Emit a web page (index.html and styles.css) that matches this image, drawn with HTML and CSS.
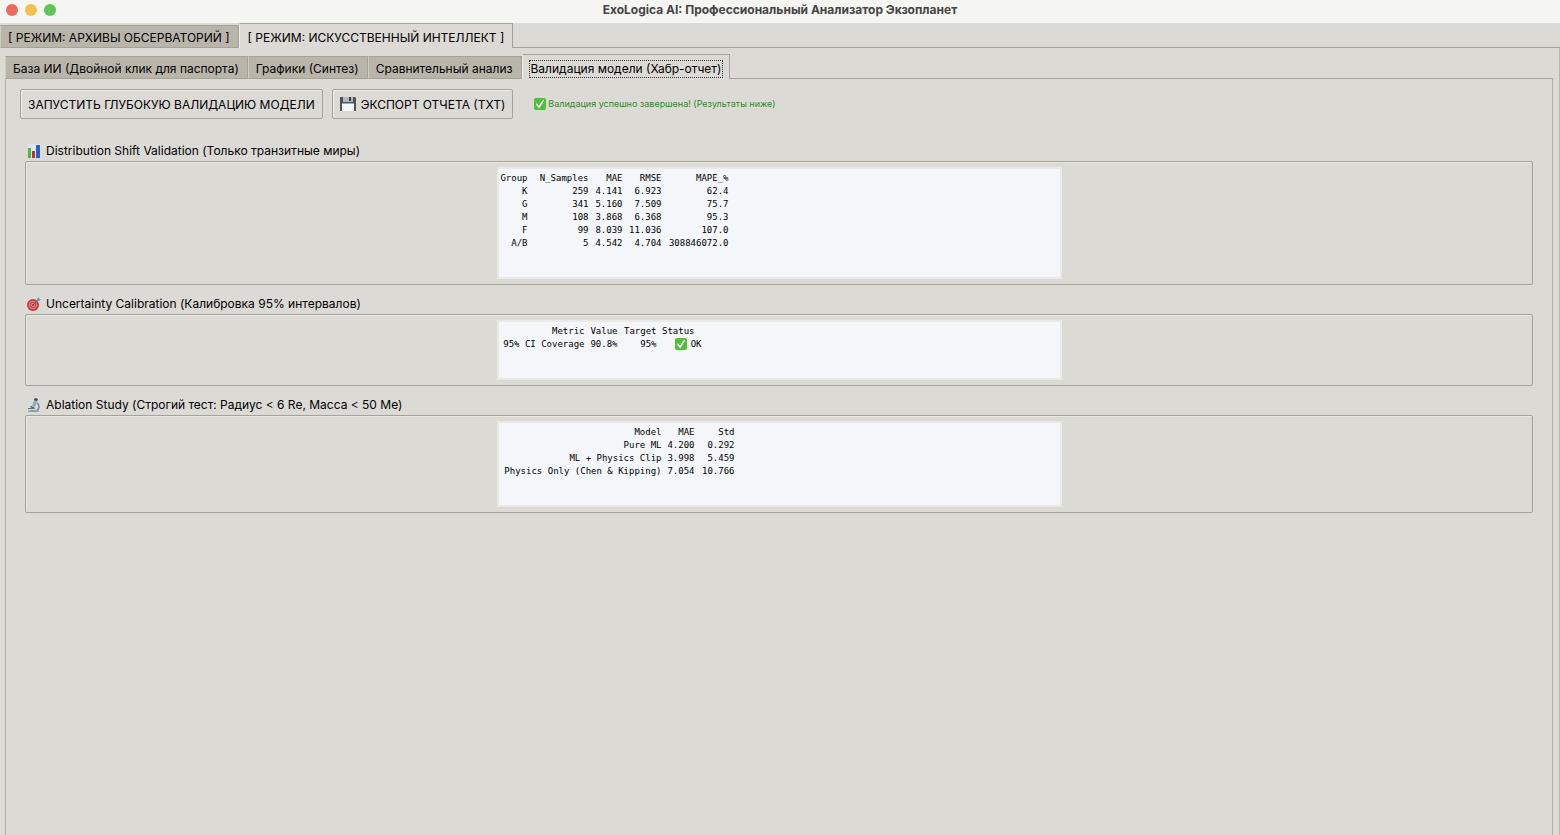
FILE: index.html
```html
<!DOCTYPE html>
<html lang="ru">
<head>
    <meta charset="UTF-8">
    <meta name="viewport" content="width=device-width, initial-scale=1.0">
    <title>ExoLogica AI: Профессиональный Анализатор Экзопланет</title>
    <link rel="stylesheet" href="styles.css">
</head>
<body>
    <header class="titlebar">
        <div class="window-buttons">
            <button class="dot red" aria-label="Закрыть"></button>
            <button class="dot yellow" aria-label="Свернуть"></button>
            <button class="dot green" aria-label="Развернуть"></button>
        </div>
        <h1 class="window-title">ExoLogica AI: Профессиональный Анализатор Экзопланет</h1>
    </header>

    <nav class="tabs mode-tabs" role="tablist">
        <button class="tab" role="tab" aria-selected="false">[ РЕЖИМ: АРХИВЫ ОБСЕРВАТОРИЙ ]</button>
        <button class="tab active" role="tab" aria-selected="true">[ РЕЖИМ: ИСКУССТВЕННЫЙ ИНТЕЛЛЕКТ ]</button>
        <span class="tab-line"></span>
    </nav>

    <main class="mode-pane">
        <nav class="tabs sub-tabs" role="tablist">
            <button class="tab" role="tab" aria-selected="false">База ИИ (Двойной клик для паспорта)</button>
            <button class="tab" role="tab" aria-selected="false">Графики (Синтез)</button>
            <button class="tab" role="tab" aria-selected="false">Сравнительный анализ</button>
            <button class="tab active" role="tab" aria-selected="true"><span class="focus-ring">Валидация модели (Хабр-отчет)</span></button>
            <span class="tab-line"></span>
        </nav>

        <div class="pane">
            <div class="toolbar">
                <button class="btn">ЗАПУСТИТЬ ГЛУБОКУЮ ВАЛИДАЦИЮ МОДЕЛИ</button>
                <button class="btn">
                    <svg class="icon-save" viewBox="0 0 16 16" aria-hidden="true">
                        <path d="M0 1h15l1 1v13H0z" fill="#505256"/>
                        <path d="M3 1h10v5H3z" fill="#b4b7bc"/>
                        <path d="M9 1h2v4H9z" fill="#3b3d41"/>
                        <path d="M2 7h12v8H2z" fill="#f4f8fc"/>
                        <path d="M2 7h12v1H2z" fill="#79b4ea"/>
                    </svg>
                    ЭКСПОРТ ОТЧЕТА (TXT)
                </button>
                <p class="status">
                    <svg class="icon-check" viewBox="0 0 12 12" aria-hidden="true">
                        <rect width="12" height="12" rx="2" fill="#4cc038"/>
                        <path d="M2.8 6.2l2.3 2.9 4.2-6.6" fill="none" stroke="#fff" stroke-width="1.5" stroke-linecap="round"/>
                    </svg>
                    Валидация успешно завершена! (Результаты ниже)
                </p>
            </div>

            <section class="group">
                <h2 class="group-title">
                    <svg class="icon" viewBox="0 0 14 14" aria-hidden="true">
                        <rect x="1" y="0" width="12" height="14" fill="#dce6ee"/>
                        <rect x="1" y="4" width="3" height="10" fill="#4fb548"/>
                        <rect x="5" y="7" width="3" height="7" fill="#c23030"/>
                        <rect x="9" y="1" width="4" height="13" fill="#2c5fc8"/>
                    </svg>
                    Distribution Shift Validation (Только транзитные миры)
                </h2>
                <div class="frame">
                    <div class="text-box tall">
                        <table class="report shift">
                            <colgroup><col class="w28"><col class="w61"><col class="w34"><col class="w39"><col class="w67"></colgroup>
                            <thead>
                                <tr><th>Group</th><th>N_Samples</th><th>MAE</th><th>RMSE</th><th>MAPE_%</th></tr>
                            </thead>
                            <tbody>
                                <tr><td>K</td><td>259</td><td>4.141</td><td>6.923</td><td>62.4</td></tr>
                                <tr><td>G</td><td>341</td><td>5.160</td><td>7.509</td><td>75.7</td></tr>
                                <tr><td>M</td><td>108</td><td>3.868</td><td>6.368</td><td>95.3</td></tr>
                                <tr><td>F</td><td>99</td><td>8.039</td><td>11.036</td><td>107.0</td></tr>
                                <tr><td>A/B</td><td>5</td><td>4.542</td><td>4.704</td><td>308846072.0</td></tr>
                            </tbody>
                        </table>
                    </div>
                </div>
            </section>

            <section class="group">
                <h2 class="group-title">
                    <svg class="icon" viewBox="0 0 14 14" aria-hidden="true">
                        <circle cx="6" cy="8" r="6" fill="#c8383a"/>
                        <circle cx="6" cy="8" r="3.8" fill="none" stroke="#e5a9a6" stroke-width="0.8"/>
                        <circle cx="6" cy="8" r="1.8" fill="none" stroke="#e5a9a6" stroke-width="0.8"/>
                        <path d="M6 8l5-5" stroke="#5b6b78" stroke-width="1"/>
                        <path d="M10 4V2l2-2v2h2l-2 2z" fill="#3fa9c0"/>
                    </svg>
                    Uncertainty Calibration (Калибровка 95% интервалов)
                </h2>
                <div class="frame">
                    <div class="text-box short">
                        <table class="report calibration">
                            <colgroup><col class="w85"><col class="w33"><col class="w39"><col class="w45"></colgroup>
                            <thead>
                                <tr><th>Metric</th><th>Value</th><th>Target</th><th class="status-head">Status</th></tr>
                            </thead>
                            <tbody>
                                <tr>
                                    <td>95% CI Coverage</td><td>90.8%</td><td>95%</td>
                                    <td>
                                        <svg class="icon-check" viewBox="0 0 12 12" aria-hidden="true">
                                            <rect width="12" height="12" rx="2" fill="#4cc038"/>
                                            <path d="M2.8 6.2l2.3 2.9 4.2-6.6" fill="none" stroke="#fff" stroke-width="1.5" stroke-linecap="round"/>
                                        </svg>
                                        OK
                                    </td>
                                </tr>
                            </tbody>
                        </table>
                    </div>
                </div>
            </section>

            <section class="group">
                <h2 class="group-title">
                    <svg class="icon" viewBox="0 0 14 14" aria-hidden="true">
                        <path d="M8 0l3 1-3 8-3-1z" fill="#8fa9bd"/>
                        <path d="M8 0l3 1-1 2-3-1z" fill="#3c4650"/>
                        <path d="M4 8l4 2-1 1-4-2z" fill="#4a555f"/>
                        <path d="M10 5c3 2 3 6-1 8" fill="none" stroke="#6f8ca3" stroke-width="1.6"/>
                        <path d="M1 10h6v1H1z" fill="#5d6c79"/>
                        <path d="M1 14c0-2 2-2 5-2s6 0 6 2z" fill="#87a2b6"/>
                    </svg>
                    Ablation Study (Строгий тест: Радиус &lt; 6 Re, Масса &lt; 50 Me)
                </h2>
                <div class="frame">
                    <div class="text-box medium">
                        <table class="report ablation">
                            <colgroup><col class="w162"><col class="w33"><col class="w40"></colgroup>
                            <thead>
                                <tr><th>Model</th><th>MAE</th><th>Std</th></tr>
                            </thead>
                            <tbody>
                                <tr><td>Pure ML</td><td>4.200</td><td>0.292</td></tr>
                                <tr><td>ML + Physics Clip</td><td>3.998</td><td>5.459</td></tr>
                                <tr><td>Physics Only (Chen &amp; Kipping)</td><td>7.054</td><td>10.766</td></tr>
                            </tbody>
                        </table>
                    </div>
                </div>
            </section>
        </div>
    </main>
</body>
</html>
```
FILE: styles.css
```css
* {
    box-sizing: border-box;
}

body {
    display: flex;
    flex-direction: column;
    min-height: 100vh;
    margin: 0;
    font-family: Inter, "Liberation Sans", sans-serif;
    font-size: 12px;
    line-height: 16px;
    color: #000000;
    background-color: #dcdad5;
}

button {
    font: inherit;
    color: inherit;
}

/* title bar */
.titlebar {
    display: grid;
    grid-template-columns: 1fr auto 1fr;
    align-items: center;
    height: 23px;
    padding-bottom: 3px;
    background-color: #f5f5f1;
}

.window-buttons {
    display: flex;
    gap: 7px;
    padding-left: 6px;
}

.dot {
    width: 12px;
    height: 12px;
    padding: 0;
    border: none;
    border-radius: 50%;
}

.red {
    background-color: #ec6a5e;
}

.yellow {
    background-color: #f4bf4f;
}

.green {
    background-color: #61c554;
}

.window-title {
    margin: 0;
    font-size: 12px;
    font-weight: 700;
    color: #454545;
}

/* tabs */
.tabs {
    display: flex;
    align-items: flex-end;
}

.tab {
    height: 23px;
    padding: 2px 8px 0 7px;
    border: 1px solid #a6a298;
    border-left-color: #cfccc4;
    background-color: #bab5ab;
    white-space: nowrap;
}

.tab.active {
    height: 25px;
    padding: 3px 8px 0;
    border-color: #a6a298;
    border-left-color: #f0efec;
    border-bottom: none;
    background-color: #dcdad5;
}

.tab-line {
    flex: 1;
    border-bottom: 1px solid #a6a298;
}

.sub-tabs .tab.active {
    padding: 3px 6px 0;
}

.focus-ring {
    display: block;
    padding: 0 1px;
    border: 1px dotted #333333;
}

.mode-pane {
    display: flex;
    flex: 1;
    flex-direction: column;
    padding: 6px 6px 0 5px;
    border-right: 1px solid #b8b5ad;
}

.pane {
    flex: 1;
    padding: 10px 19px 0;
    border: 1px solid #b3b0a8;
    border-width: 0 1px;
}

/* toolbar */
.toolbar {
    display: flex;
    align-items: center;
    gap: 9px;
    margin: 0 -5px 23px;
}

.btn {
    display: flex;
    align-items: center;
    gap: 5px;
    height: 30px;
    padding: 2px 7px 0;
    border: 1px solid #a6a298;
    border-radius: 2px;
    background-color: #dcdad5;
    box-shadow: inset 1px 1px #edece9;
    white-space: nowrap;
}

.icon-save {
    width: 16px;
    height: 16px;
    margin-bottom: 2px;
}

.status {
    display: flex;
    align-items: center;
    gap: 2px;
    margin: 0 0 0 12px;
    font-size: 9px;
    color: #2e8b1f;
}

.icon-check {
    width: 12px;
    height: 12px;
}

/* report groups */
.group {
    margin-bottom: 10px;
}

.group-title {
    display: flex;
    align-items: center;
    gap: 5px;
    margin: 0;
    padding: 1px 0 2px 2px;
    font-size: 12px;
    font-weight: 400;
}

.icon {
    width: 14px;
    height: 14px;
}

.frame {
    display: flex;
    justify-content: center;
    padding: 5px;
    border: 1px solid #a6a298;
    border-radius: 2px;
    box-shadow: inset 1px 1px #e8e7e3;
}

.text-box {
    width: 565px;
    padding: 3px 1px 2px;
    border: 2px solid #e9e9e6;
    background-color: #f5f6fa;
}

.tall {
    min-height: 112px;
}

.medium {
    min-height: 86px;
}

.short {
    min-height: 60px;
}

/* report tables */
.report {
    table-layout: fixed;
    border-collapse: collapse;
    font-family: "DejaVu Sans Mono", monospace;
    font-size: 9px;
    line-height: 13px;
}

.shift {
    width: 229px;
}

.calibration {
    width: 202px;
}

.ablation {
    width: 235px;
}

.report th,
.report td {
    height: 13px;
    padding: 0;
    font-weight: 400;
    text-align: right;
    white-space: nowrap;
}

.report .status-head {
    padding-right: 7px;
}

.report .icon-check {
    margin-right: -2px;
    vertical-align: top;
}

.w28 {
    width: 28px;
}

.w33 {
    width: 33px;
}

.w34 {
    width: 34px;
}

.w39 {
    width: 39px;
}

.w40 {
    width: 40px;
}

.w45 {
    width: 45px;
}

.w61 {
    width: 61px;
}

.w67 {
    width: 67px;
}

.w85 {
    width: 85px;
}

.w162 {
    width: 162px;
}
```
